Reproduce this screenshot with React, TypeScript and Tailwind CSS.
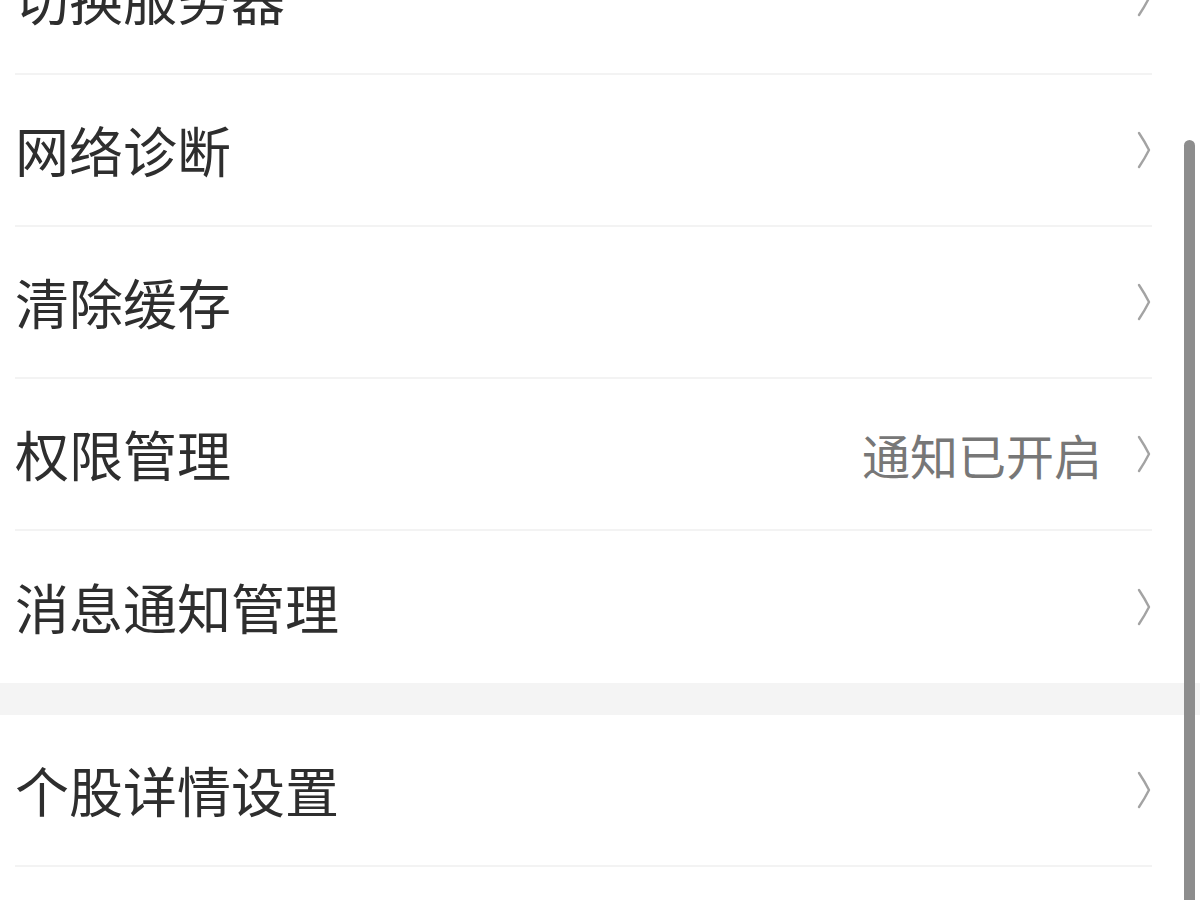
import React from 'react';

interface SettingItem {
    label: string;
    value?: string;
}

const groups: SettingItem[][] = [
    [
        { label: '切换服务器' },
        { label: '网络诊断' },
        { label: '清除缓存' },
        { label: '权限管理', value: '通知已开启' },
        { label: '消息通知管理' },
    ],
    [
        { label: '个股详情设置' },
    ],
];

function Chevron() {
    return (
        <svg width="16" height="40" viewBox="0 0 16 40" fill="none" className="shrink-0">
            <path
                d="M3 3 Q 9 12 13 20 Q 9 28 3 37"
                stroke="#a3a3a3"
                strokeWidth="2.4"
                strokeLinecap="round"
                strokeLinejoin="round"
            />
        </svg>
    );
}

function SettingRow({ item, last }: { item: SettingItem; last: boolean }) {
    return (
        <div className="pl-[15px] pr-[48px] bg-white">
            <div
                className={
                    last
                        ? 'flex items-center h-[152px]'
                        : 'flex items-center h-[152px] border-b-2 border-[#f3f3f3]'
                }
            >
                <span className="flex-1 text-[54px] leading-none text-[#2e2e2e]">{item.label}</span>
                {item.value && (
                    <span className="mr-[34px] text-[48px] leading-none text-[#777777]">{item.value}</span>
                )}
                <Chevron />
            </div>
        </div>
    );
}

export default function App() {
    return (
        <div
            className="relative w-[1200px] h-[900px] overflow-hidden bg-white"
            style={{ fontFamily: '"Noto Sans CJK SC", "Noto Sans", sans-serif' }}
        >
            <div className="-mt-[77px]">
                {groups.map((group, gi) => (
                    <div key={gi}>
                        {gi > 0 && <div className="h-[32px] bg-[#f4f4f4]" />}
                        {group.map((item, i) => (
                            <SettingRow
                                key={item.label}
                                item={item}
                                last={gi === 0 && i === group.length - 1}
                            />
                        ))}
                    </div>
                ))}
            </div>
            {/* scroll indicator */}
            <div className="absolute right-[5px] top-[140px] bottom-0 w-[11px] rounded-t-full bg-[#8d8d8d]" />
        </div>
    );
}
